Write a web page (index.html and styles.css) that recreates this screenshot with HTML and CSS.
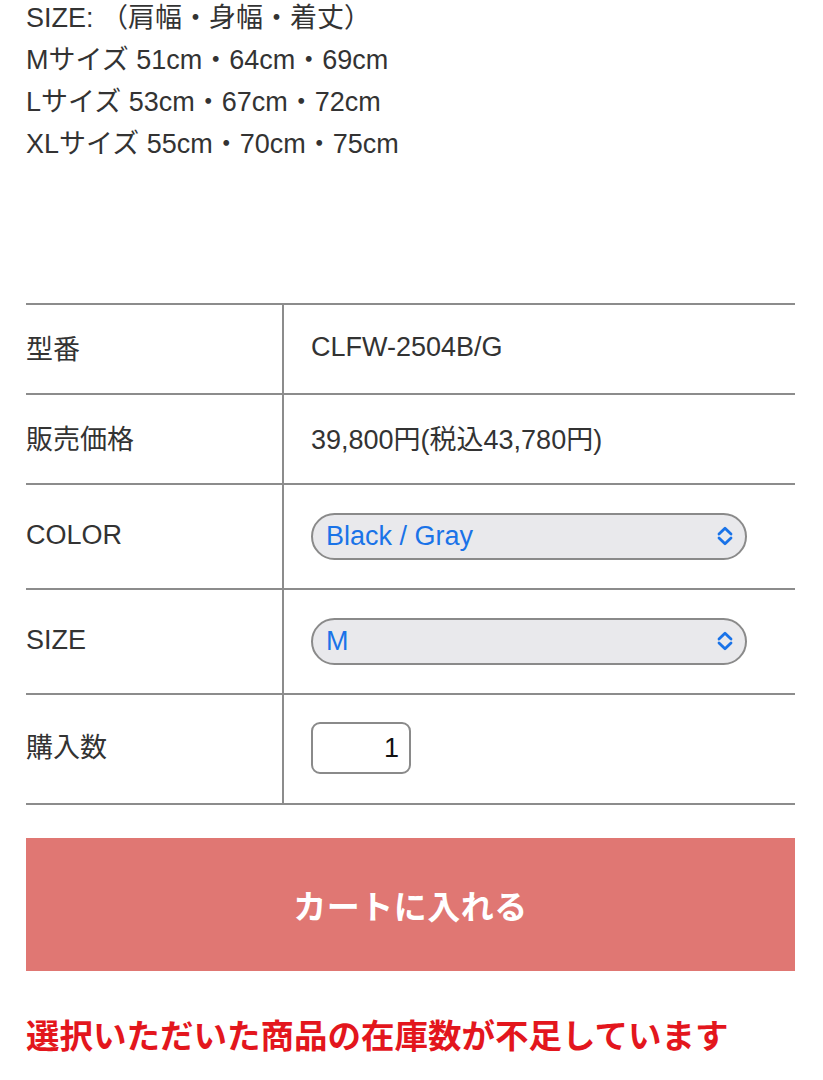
FILE: index.html
```html
<!DOCTYPE html>
<html lang="ja">
<head>
<meta charset="utf-8">
<link rel="stylesheet" href="styles.css">
</head>
<body>
<div class="page">
  <div class="spec">
    <p>SIZE: （肩幅・身幅・着丈）</p>
    <p>Mサイズ 51cm・64cm・69cm</p>
    <p>Lサイズ 53cm・67cm・72cm</p>
    <p>XLサイズ 55cm・70cm・75cm</p>
  </div>

  <table class="cart-table">
    <tr class="row-info">
      <th>型番</th>
      <td>CLFW-2504B/G</td>
    </tr>
    <tr class="row-info">
      <th>販売価格</th>
      <td>39,800円(税込43,780円)</td>
    </tr>
    <tr class="row-select">
      <th>COLOR</th>
      <td>
        <div class="select-wrap">
          <select class="pill-select"><option>Black / Gray</option></select>
          <svg class="chev" viewBox="0 0 18 22" width="18" height="22"><path d="M3 9 L9 3.2 L15 9 M3 13 L9 18.8 L15 13" fill="none" stroke="#1a73e8" stroke-width="2.8" stroke-linecap="round" stroke-linejoin="round"/></svg>
        </div>
      </td>
    </tr>
    <tr class="row-select">
      <th>SIZE</th>
      <td>
        <div class="select-wrap">
          <select class="pill-select"><option>M</option></select>
          <svg class="chev" viewBox="0 0 18 22" width="18" height="22"><path d="M3 9 L9 3.2 L15 9 M3 13 L9 18.8 L15 13" fill="none" stroke="#1a73e8" stroke-width="2.8" stroke-linecap="round" stroke-linejoin="round"/></svg>
        </div>
      </td>
    </tr>
    <tr class="row-qty">
      <th>購入数</th>
      <td><input class="qty" type="text" value="1"></td>
    </tr>
  </table>

  <button class="cart-btn" type="button">カートに入れる</button>

  <p class="stock-msg">選択いただいた商品の在庫数が不足しています</p>
</div>
</body>
</html>
```

FILE: styles.css
```css
* { box-sizing: border-box; }

body {
  margin: 0;
  background: #fff;
  color: #333;
  font-family: "Liberation Sans", "Noto Sans CJK JP", sans-serif;
}

.page {
  padding: 0 28px 0 26px;
}

.spec {
  margin-top: -3px;
  font-size: 27px;
  line-height: 42px;
}

.spec p {
  margin: 0;
}

.cart-table {
  width: 100%;
  margin-top: 138px;
  border-collapse: collapse;
  font-size: 27px;
  color: #333;
}

.cart-table th,
.cart-table td {
  border-top: 2px solid #8c8c8c;
  border-bottom: 2px solid #8c8c8c;
  padding: 0 0 3px;
  text-align: left;
  font-weight: normal;
  vertical-align: middle;
}

.cart-table th {
  width: 257px;
  border-right: 2px solid #8c8c8c;
}

.cart-table td {
  padding-left: 27px;
}

.row-info th, .row-info td { height: 90px; }
.row-select th, .row-select td { height: 105px; }
.row-qty th, .row-qty td { height: 110px; }
.row-qty th { padding-bottom: 8px; }
.row-qty td { padding-bottom: 2px; }
.row-select td { padding-bottom: 1px; }

.select-wrap {
  position: relative;
  width: 436px;
}

.pill-select {
  appearance: none;
  -webkit-appearance: none;
  display: block;
  width: 100%;
  height: 47px;
  padding: 0 40px 0 13px;
  border: 2px solid #8a8a8a;
  border-radius: 24px;
  background: #e9e9ec;
  color: #1a73e8;
  font-family: "Liberation Sans", "Noto Sans CJK JP", sans-serif;
  font-size: 27px;
  line-height: 43px;
}

.chev {
  position: absolute;
  right: 13px;
  top: 12px;
  pointer-events: none;
}

.qty {
  display: block;
  width: 100px;
  height: 52px;
  border: 2px solid #8a8a8a;
  border-radius: 9px;
  padding: 0 10px;
  text-align: right;
  font-family: "Liberation Sans", sans-serif;
  font-size: 27px;
  color: #111;
  background: #fff;
}

.cart-btn {
  display: block;
  width: 100%;
  height: 133px;
  margin-top: 33px;
  border: 0;
  background: #e07773;
  color: #fff;
  font-family: "Noto Sans CJK JP", sans-serif;
  font-weight: 700;
  font-size: 33px;
  letter-spacing: 0.5px;
}

.stock-msg {
  margin: 38px 0 0;
  color: #e3161d;
  font-family: "Noto Sans CJK JP", sans-serif;
  font-weight: 700;
  font-size: 33.5px;
  line-height: 50px;
}
```
